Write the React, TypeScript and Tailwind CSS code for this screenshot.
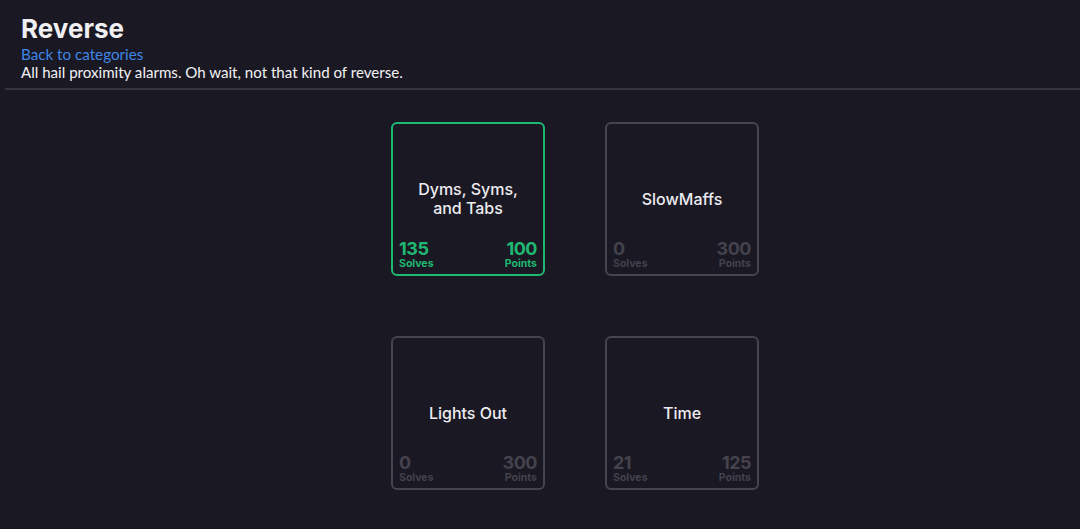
const cards = [
  { title: "Dyms, Syms, and Tabs", solves: 135, points: 100, solved: true },
  { title: "SlowMaffs", solves: 0, points: 300, solved: false },
  { title: "Lights Out", solves: 0, points: 300, solved: false },
  { title: "Time", solves: 21, points: 125, solved: false },
];

const heading = { fontFamily: "Inter, 'DejaVu Sans', sans-serif" };

function Card({ title, solves, points, solved }: (typeof cards)[number]) {
  const tone = solved ? "text-[#1fb872]" : "text-[#44424c]";
  return (
    <div
      className={`relative flex h-[154px] w-[154px] items-center justify-center rounded-[6px] border-2 ${
        solved ? "border-[#1fb872]" : "border-[#46444e]"
      }`}
    >
      <div className="w-[120px] text-center text-[16px] font-medium leading-[19px] text-[#ececf0]" style={heading}>
        {title}
      </div>
      <div className={`absolute inset-x-[6px] bottom-[4px] flex justify-between ${tone}`} style={heading}>
        <div className="flex flex-col items-start">
          <span className="text-[18px] font-bold leading-[18px] tracking-[-0.5px]">{solves}</span>
          <span className="text-[10.5px] font-bold leading-[12px]">Solves</span>
        </div>
        <div className="flex flex-col items-end">
          <span className="text-[18px] font-bold leading-[18px] tracking-[-0.5px]">{points}</span>
          <span className="text-[10.5px] font-bold leading-[12px]">Points</span>
        </div>
      </div>
    </div>
  );
}

export default function App() {
  return (
    <div className="min-h-[529px] bg-[#1a1823] text-white" style={{ fontFamily: "Lato, 'Open Sans', sans-serif" }}>
      <header className="px-[21px] pt-[12px]">
        <h1 className="text-[26px] font-bold leading-[33px] text-[#f0f0f2]" style={heading}>
          Reverse
        </h1>
        <a href="#" className="block text-[15.2px] leading-[18px] text-[#3f86e6]">
          Back to categories
        </a>
        <p className="text-[15.1px] leading-[19px] text-[#f2f2f4]">
          All hail proximity alarms. Oh wait, not that kind of reverse.
        </p>
      </header>
      <div className="ml-[5px] mt-[6px] h-[2px] bg-[#35333d]" />
      <main className="ml-[391px] mt-[32px] grid w-max grid-cols-[154px_154px] gap-[60px]">
        {cards.map((c) => (
          <Card key={c.title} {...c} />
        ))}
      </main>
    </div>
  );
}
